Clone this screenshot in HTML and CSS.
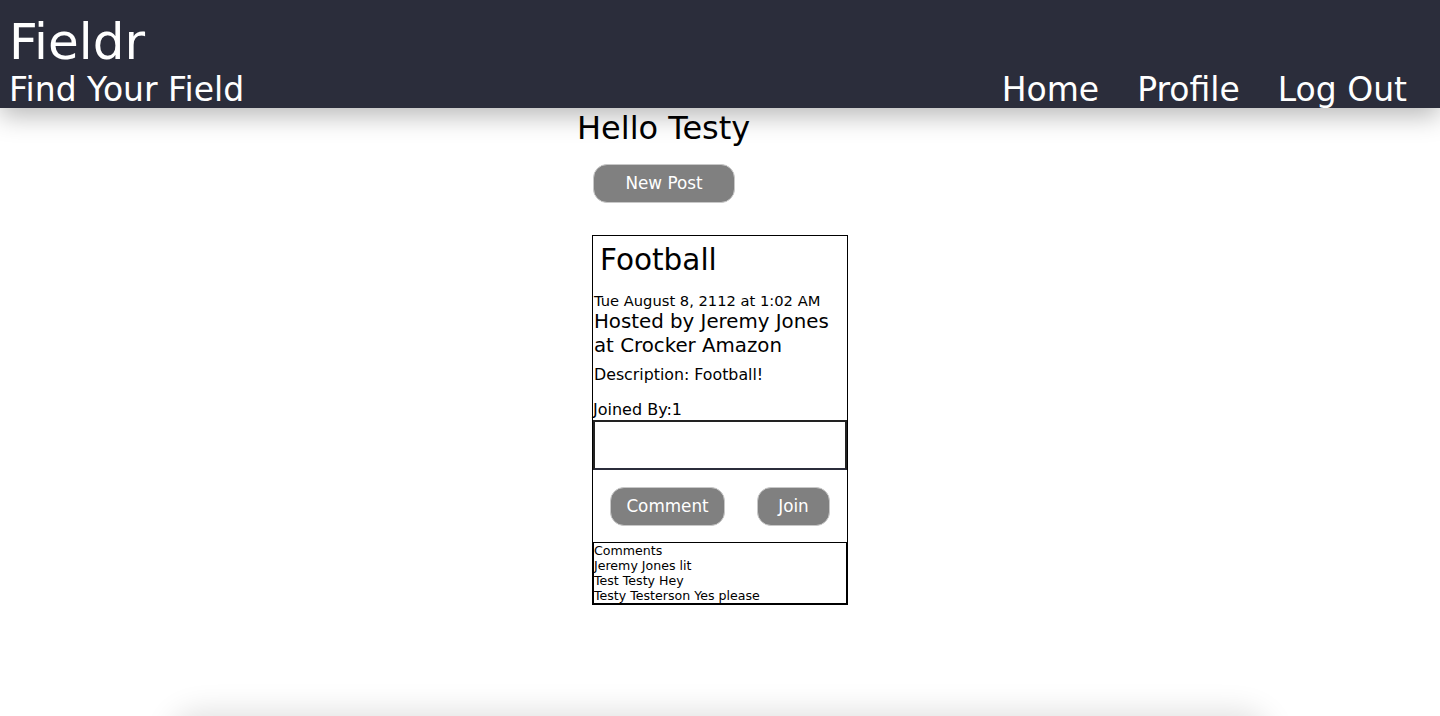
FILE: index.html
```html
<!DOCTYPE html>
<html>
<head>
<meta charset="utf-8">
<title>Fieldr</title>
<link rel="stylesheet" href="styles.css">
</head>
<body>
<header class="topbar">
  <div class="brand">
    <div class="logo">Fieldr</div>
    <div class="tagline">Find Your Field</div>
  </div>
  <nav class="nav">
    <a class="nav-link" href="#">Home</a>
    <a class="nav-link" href="#">Profile</a>
    <a class="nav-link" href="#">Log Out</a>
  </nav>
</header>
<main class="main">
  <h2 class="hello">Hello Testy</h2>
  <button class="btn btn-new">New Post</button>
  <section class="card">
    <h3 class="card-title">Football</h3>
    <div class="card-date">Tue August 8, 2112 at 1:02 AM</div>
    <div class="card-host">Hosted by Jeremy Jones at Crocker Amazon</div>
    <div class="card-desc">Description: Football!</div>
    <div class="card-joined">Joined By:1</div>
    <textarea class="card-input"></textarea>
    <div class="card-actions">
      <button class="btn btn-comment">Comment</button>
      <button class="btn btn-join">Join</button>
    </div>
    <div class="comments">
      <div>Comments</div>
      <div>Jeremy Jones lit</div>
      <div>Test Testy Hey</div>
      <div>Testy Testerson Yes please</div>
    </div>
  </section>
</main>
<footer class="footer"></footer>
</body>
</html>
```
FILE: styles.css
```css
html, body {
  margin: 0;
  padding: 0;
}
body {
  font-family: "DejaVu Sans", "Noto Sans", sans-serif;
  color: #000;
  background: #fff;
}
.topbar {
  position: relative;
  z-index: 1;
  height: 108px;
  box-sizing: border-box;
  background: #2b2d3b;
  color: #fff;
  display: flex;
  justify-content: space-between;
  align-items: flex-end;
  padding: 0 33px 0 9px;
  box-shadow: 0 8px 24px rgba(0, 0, 0, 0.28);
}
.brand {
  display: flex;
  flex-direction: column;
}
.logo {
  font-size: 50px;
  line-height: 58px;
}
.tagline {
  font-size: 33px;
  line-height: 37px;
  white-space: nowrap;
}
.nav {
  display: flex;
  gap: 38px;
}
.nav-link {
  color: #fff;
  text-decoration: none;
  font-size: 33px;
  line-height: 37px;
  white-space: nowrap;
}
.main {
  width: 256px;
  margin: 0 auto;
  display: flex;
  flex-direction: column;
  align-items: flex-start;
}
.hello {
  font-weight: normal;
  font-size: 32px;
  line-height: 40px;
  margin: 0 0 0 -15px;
  white-space: nowrap;
}
.btn {
  font-family: inherit;
  background: #808080;
  color: #fff;
  border: 1px solid #c8c8c8;
  border-radius: 14px;
  font-size: 16.8px;
  cursor: pointer;
  padding: 0 0 2px;
}
.btn-new {
  width: 142px;
  height: 39px;
  margin: 16px 0 0 1px;
}
.card {
  margin-top: 32px;
  width: 256px;
  box-sizing: border-box;
  border: 1px solid #000;
  display: flex;
  flex-direction: column;
}
.card-title {
  font-weight: normal;
  font-size: 29.5px;
  line-height: 36px;
  margin: 6px 0 0 7px;
}
.card-date {
  font-size: 14.7px;
  line-height: 18px;
  margin-top: 14px;
  padding-left: 1px;
}
.card-host {
  font-size: 19.8px;
  line-height: 24px;
  padding-left: 1px;
}
.card-desc {
  font-size: 15.8px;
  line-height: 18px;
  margin-top: 8px;
  padding-left: 1px;
}
.card-joined {
  font-size: 16px;
  line-height: 18px;
  margin-top: 17px;
}
.card-input {
  display: block;
  box-sizing: border-box;
  width: 254px;
  height: 50px;
  margin: 1px 0 0;
  border: 2px solid #222;
  border-bottom-color: #2b2d3b;
  resize: none;
}
.card-actions {
  display: flex;
  justify-content: space-between;
  padding: 17px 17px 16px 17px;
}
.btn-comment {
  width: 115px;
  height: 39px;
}
.btn-join {
  width: 73px;
  height: 39px;
}
.comments {
  border: 1px solid #000;
  font-size: 12.6px;
  line-height: 15px;
  padding: 0;
  white-space: nowrap;
}
.footer {
  width: 1100px;
  height: 80px;
  margin: 112px auto 0;
  border-radius: 30px 30px 0 0;
  background: #fff;
  box-shadow: 0 -6px 30px rgba(0, 0, 0, 0.12);
}
```
